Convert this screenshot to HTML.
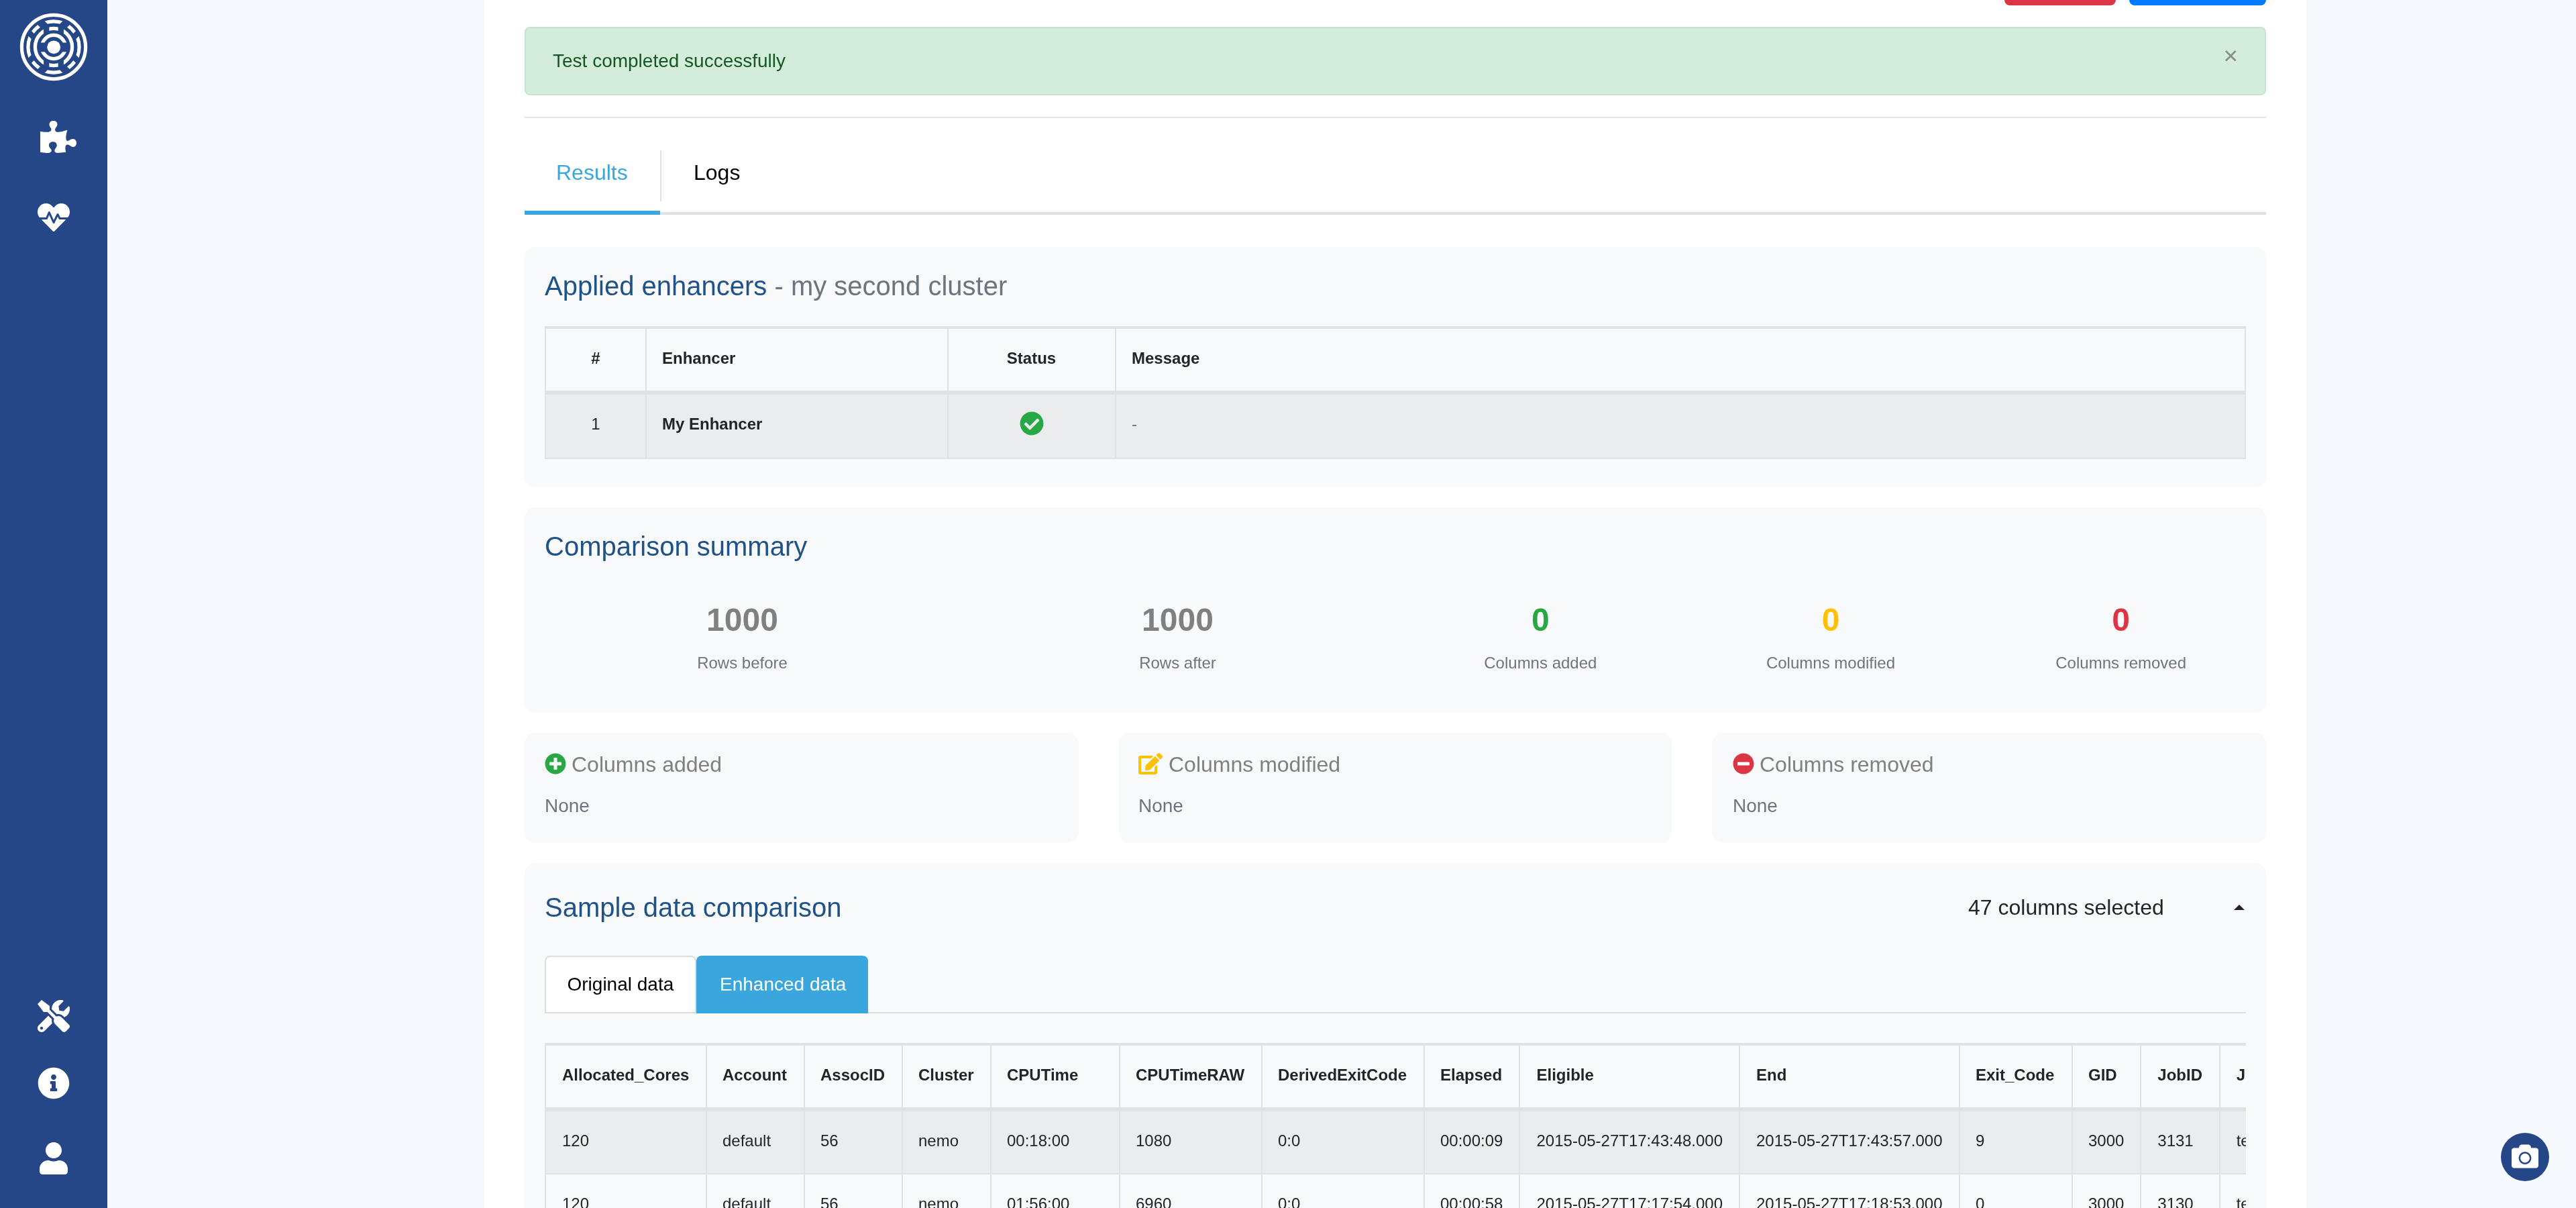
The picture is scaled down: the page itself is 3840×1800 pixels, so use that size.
<!DOCTYPE html>
<html>
<head>
<meta charset="utf-8">
<title>Enhancer test results</title>
<style>
html,body{margin:0;padding:0;}
body{width:3840px;height:1800px;overflow:hidden;position:relative;background:#f5f8fd;font-family:"Liberation Sans",sans-serif;color:#212529;}
.abs{position:absolute;}
.t{position:absolute;white-space:nowrap;margin:0;}
#sidebar{left:0;top:0;width:160px;height:1800px;background:#254687;}
#sidebar svg{position:absolute;fill:#fff;}
#content{left:722px;top:0;width:2716px;height:1800px;background:#fff;}
.card{position:absolute;background:#f8f9fa;border-radius:16px;}
.h5{font-size:40px;line-height:48px;color:#1f5288;}
.muted{color:#6c757d;}
table{border-collapse:collapse;table-layout:fixed;font-size:24px;line-height:36px;color:#212529;}
th,td{border:2px solid #dee2e6;padding:0 24px 0 23px;text-align:left;overflow:hidden;white-space:nowrap;box-sizing:border-box;}
th{font-weight:bold;}
th,td{vertical-align:top;}
.hd{border-top-width:4px;border-bottom-width:6px;padding-top:26px;}
.r1{padding-top:26px;}
tr>:first-child{padding-left:24px;}
#t2 tr>:nth-child(9){padding-left:24.5px;}
#t2 tr>:nth-child(10){padding-left:24px;}
#t2 tr>:nth-child(13){padding-left:24.3px;}
#t2 tr>:nth-child(14){padding-left:23.7px;}
</style>
</head>
<body>
<div id="root" style="position:absolute;left:0;top:0;width:3840px;height:1800px;overflow:hidden;will-change:transform;">

<!-- content column -->
<div id="content" class="abs"></div>

<!-- top buttons (cut off) -->
<div class="abs" style="left:2988px;top:-40px;width:166px;height:48px;background:#dc3545;border-radius:8px;"></div>
<div class="abs" style="left:3174px;top:-40px;width:204px;height:48px;background:#007bff;border-radius:8px;"></div>

<!-- alert -->
<div class="abs" style="left:782px;top:40px;width:2596px;height:102px;box-sizing:border-box;background:#d4edda;border:2px solid #c3e6cb;border-radius:8px;"></div>
<div class="t" style="left:824px;top:70px;font-size:28px;line-height:42px;color:#155724;">Test completed successfully</div>
<svg class="abs" style="left:3313px;top:71px;" width="26" height="28" viewBox="0 0 26 28"><path d="M5 6.7 L19.6 21.3 M19.6 6.7 L5 21.3" stroke="#fff" stroke-width="3" fill="none" opacity=".55"/><path d="M5 5 L19.6 19.6 M19.6 5 L5 19.6" stroke="#85948a" stroke-width="3" fill="none"/></svg>

<!-- hr -->
<div class="abs" style="left:782px;top:174px;width:2596px;height:2px;background:#e5e5e5;"></div>

<!-- main tabs -->
<div class="t" style="left:829px;top:233px;font-size:32px;line-height:48px;color:#39a7dd;">Results</div>
<div class="abs" style="left:984px;top:224px;width:2px;height:76px;background:#dee2e6;"></div>
<div class="t" style="left:1034px;top:233px;font-size:32px;line-height:48px;color:#000;">Logs</div>
<div class="abs" style="left:782px;top:316px;width:2596px;height:4px;background:#dee2e6;"></div>
<div class="abs" style="left:782px;top:314px;width:202px;height:6px;background:#39a7dd;"></div>

<!-- card 1 : applied enhancers -->
<div class="card" style="left:782px;top:368px;width:2596px;height:358px;"></div>
<div class="t h5" style="left:812px;top:402px;">Applied enhancers <span class="muted">- my second cluster</span></div>
<table class="abs" id="t1" style="left:812px;top:486px;width:2534px;">
<colgroup><col style="width:150px"><col style="width:450px"><col style="width:250px"><col style="width:1684px"></colgroup>
<thead><tr style="height:97px;"><th class="hd" style="text-align:center;">#</th><th class="hd">Enhancer</th><th class="hd" style="text-align:center;">Status</th><th class="hd">Message</th></tr></thead>
<tbody><tr style="height:98px;background:#ebecee;"><td class="r1" style="text-align:center;">1</td><td class="r1"><b>My Enhancer</b></td><td class="r1" style="padding-top:25px;"><svg width="36" height="36" viewBox="0 0 512 512" style="display:block;margin:0 auto;position:relative;left:0.5px;fill:#28a745;"><path d="M504 256c0 136.967-111.033 248-248 248S8 392.967 8 256 119.033 8 256 8s248 111.033 248 248zM227.314 387.314l184-184c6.248-6.248 6.248-16.379 0-22.627l-22.627-22.627c-6.248-6.249-16.379-6.249-22.628 0L216 308.118l-70.059-70.059c-6.248-6.248-16.379-6.248-22.628 0l-22.627 22.627c-6.248 6.248-6.248 16.379 0 22.627l104 104c6.249 6.249 16.379 6.249 22.628.001z"/></svg></td><td class="r1 muted">-</td></tr></tbody>
</table>

<!-- card 2 : comparison summary -->
<div class="card" style="left:782px;top:756px;width:2596px;height:306px;"></div>
<div class="t h5" style="left:812px;top:790px;">Comparison summary</div>

<div class="t" style="left:782px;width:649px;top:888px;text-align:center;font-size:48px;line-height:72px;font-weight:bold;color:#808080;">1000</div>
<div class="t muted" style="left:782px;width:649px;top:968px;text-align:center;font-size:24px;line-height:40px;">Rows before</div>
<div class="t" style="left:1431px;width:649px;top:888px;text-align:center;font-size:48px;line-height:72px;font-weight:bold;color:#808080;">1000</div>
<div class="t muted" style="left:1431px;width:649px;top:968px;text-align:center;font-size:24px;line-height:40px;">Rows after</div>
<div class="t" style="left:2080px;width:432.67px;top:888px;text-align:center;font-size:48px;line-height:72px;font-weight:bold;color:#28a745;">0</div>
<div class="t muted" style="left:2080px;width:432.67px;top:968px;text-align:center;font-size:24px;line-height:40px;">Columns added</div>
<div class="t" style="left:2512.67px;width:432.67px;top:888px;text-align:center;font-size:48px;line-height:72px;font-weight:bold;color:#ffc107;">0</div>
<div class="t muted" style="left:2512.67px;width:432.67px;top:968px;text-align:center;font-size:24px;line-height:40px;">Columns modified</div>
<div class="t" style="left:2945.33px;width:432.67px;top:888px;text-align:center;font-size:48px;line-height:72px;font-weight:bold;color:#dc3545;">0</div>
<div class="t muted" style="left:2945.33px;width:432.67px;top:968px;text-align:center;font-size:24px;line-height:40px;">Columns removed</div>
<!-- card 3a/3b/3c -->
<div class="card" style="left:782px;top:1092px;width:826px;height:164px;"></div>
<div class="card" style="left:1668px;top:1092px;width:824px;height:164px;"></div>
<div class="card" style="left:2552px;top:1092px;width:826px;height:164px;"></div>

<svg class="abs" style="left:812px;top:1122px;fill:#28a745;" width="32" height="32" viewBox="0 0 512 512"><path d="M256 8C119 8 8 119 8 256s111 248 248 248 248-111 248-248S393 8 256 8zm144 276c0 6.600-5.400 12-12 12h-92v92c0 6.600-5.400 12-12 12h-56c-6.600 0-12-5.400-12-12v-92h-92c-6.600 0-12-5.400-12-12v-56c0-6.600 5.400-12 12-12h92v-92c0-6.600 5.400-12 12-12h56c6.600 0 12 5.400 12 12v92h92c6.600 0 12 5.400 12 12v56z"/></svg>
<div class="t" style="left:852px;top:1115px;font-size:32px;line-height:48px;color:#808080;">Columns added</div>
<div class="t muted" style="left:812px;top:1180px;font-size:28px;line-height:42px;">None</div>
<svg class="abs" style="left:1697px;top:1122px;fill:#ffc107;" width="36" height="32" viewBox="0 0 576 512"><path d="M402.600 83.200l90.200 90.200c3.800 3.800 3.800 10 0 13.800L274.400 405.600l-92.800 10.300c-12.400 1.400-22.900-9.100-21.500-21.500l10.300-92.800L388.800 83.200c3.800-3.800 10-3.800 13.800 0zm162-22.900l-48.800-48.800c-15.200-15.200-39.900-15.200-55.200 0l-35.400 35.400c-3.800 3.800-3.800 10 0 13.800l90.200 90.200c3.800 3.800 10 3.800 13.800 0l35.400-35.400c15.200-15.300 15.200-40 0-55.200zM384 346.200V448H64V128h229.800c3.200 0 6.200-1.300 8.500-3.500l40-40c7.600-7.600 2.200-20.500-8.500-20.500H48C21.500 64 0 85.500 0 112v352c0 26.500 21.500 48 48 48h352c26.500 0 48-21.500 48-48V306.200c0-10.700-12.900-16-20.500-8.500l-40 40c-2.200 2.300-3.500 5.300-3.500 8.500z"/></svg>
<div class="t" style="left:1742px;top:1115px;font-size:32px;line-height:48px;color:#808080;">Columns modified</div>
<div class="t muted" style="left:1697px;top:1180px;font-size:28px;line-height:42px;">None</div>
<svg class="abs" style="left:2583px;top:1122px;fill:#dc3545;" width="32" height="32" viewBox="0 0 512 512"><path d="M256 8C119 8 8 119 8 256s111 248 248 248 248-111 248-248S393 8 256 8zM124 296c-6.600 0-12-5.400-12-12v-56c0-6.600 5.400-12 12-12h264c6.600 0 12 5.400 12 12v56c0 6.600-5.400 12-12 12H124z"/></svg>
<div class="t" style="left:2623px;top:1115px;font-size:32px;line-height:48px;color:#808080;">Columns removed</div>
<div class="t muted" style="left:2583px;top:1180px;font-size:28px;line-height:42px;">None</div>
<!-- card 4 : sample data -->
<div class="card" style="left:782px;top:1286px;width:2596px;height:600px;"></div>
<div class="t h5" style="left:812px;top:1328px;">Sample data comparison</div>

<div class="t" style="left:2934px;top:1328px;font-size:32px;line-height:48px;color:#212529;">47 columns selected</div>
<div class="abs" style="left:3330px;top:1348px;width:0;height:0;border-left:8px solid transparent;border-right:8px solid transparent;border-bottom:8px solid #212529;"></div>
<!-- nav tabs -->
<div class="abs" style="left:812px;top:1508px;width:2536px;height:2px;background:#ddd;"></div>
<div class="abs" style="left:812px;top:1424px;width:226px;height:86px;box-sizing:border-box;background:#fff;border:2px solid #ddd;border-radius:8px 8px 0 0;"></div>
<div class="t" style="left:845.5px;top:1446px;font-size:28px;line-height:42px;color:#000;">Original data</div>
<div class="abs" style="left:1038px;top:1424px;width:256px;height:86px;background:#39a7dd;border-radius:8px 8px 0 0;"></div>
<div class="t" style="left:1073px;top:1446px;font-size:28px;line-height:42px;color:#fff;">Enhanced data</div>
<!-- data table -->
<div class="abs" style="left:812px;top:1554px;width:2536px;height:246px;overflow:hidden;">
<table id="t2" style="width:2796px;">
<colgroup><col style="width:240px"><col style="width:146px"><col style="width:146px"><col style="width:132px"><col style="width:192px"><col style="width:212px"><col style="width:242px"><col style="width:142px"><col style="width:328px"><col style="width:328px"><col style="width:168px"><col style="width:102px"><col style="width:118px"><col style="width:300px"></colgroup>
<thead><tr style="height:97px;"><th class="hd">Allocated_Cores</th><th class="hd">Account</th><th class="hd">AssocID</th><th class="hd">Cluster</th><th class="hd">CPUTime</th><th class="hd">CPUTimeRAW</th><th class="hd">DerivedExitCode</th><th class="hd">Elapsed</th><th class="hd">Eligible</th><th class="hd">End</th><th class="hd">Exit_Code</th><th class="hd">GID</th><th class="hd">JobID</th><th class="hd">J</th></tr></thead>
<tbody><tr style="height:96px;background:#ebecee;"><td class="r1">120</td><td class="r1">default</td><td class="r1">56</td><td class="r1">nemo</td><td class="r1">00:18:00</td><td class="r1">1080</td><td class="r1">0:0</td><td class="r1">00:00:09</td><td class="r1">2015-05-27T17:43:48.000</td><td class="r1">2015-05-27T17:43:57.000</td><td class="r1">9</td><td class="r1">3000</td><td class="r1">3131</td><td class="r1">test</td></tr><tr style="height:96px;"><td class="r1">120</td><td class="r1">default</td><td class="r1">56</td><td class="r1">nemo</td><td class="r1">01:56:00</td><td class="r1">6960</td><td class="r1">0:0</td><td class="r1">00:00:58</td><td class="r1">2015-05-27T17:17:54.000</td><td class="r1">2015-05-27T17:18:53.000</td><td class="r1">0</td><td class="r1">3000</td><td class="r1">3130</td><td class="r1">test</td></tr></tbody>
</table>
</div>

<!-- camera fab -->
<div class="abs" style="left:3728px;top:1688px;width:72px;height:72px;border-radius:50%;background:#254687;"></div>
<svg class="abs" style="left:3744px;top:1703px;fill:#fff;" width="40" height="40" viewBox="0 0 512 512"><path d="M512 144v288c0 26.500-21.500 48-48 48H48c-26.500 0-48-21.500-48-48V144c0-26.500 21.500-48 48-48h88l12.300-32.900c7-18.700 24.900-31.100 44.900-31.100h125.500c20 0 37.900 12.400 44.900 31.100L376 96h88c26.500 0 48 21.500 48 48zM376 288c0-66.200-53.800-120-120-120s-120 53.800-120 120 53.800 120 120 120 120-53.800 120-120zm-32 0c0 48.500-39.500 88-88 88s-88-39.500-88-88 39.500-88 88-88 88 39.500 88 88z"/></svg>

<!-- sidebar -->
<div id="sidebar" class="abs">
<!-- logo -->
<svg style="left:28px;top:18px;" width="104" height="104" viewBox="-52 -52 104 104">
<defs><clipPath id="c3"><circle r="33"/></clipPath><clipPath id="c4"><circle r="22.6"/></clipPath>
<g id="bq" transform="rotate(-45)"><rect x="20" y="6.5" width="40" height="8.6"/><rect x="20" y="-17.8" width="40" height="11.3"/></g></defs>
<g fill="none" stroke="#fff">
<circle r="38.1" stroke-width="5.2"/>
<g fill="#254687" stroke="none">
<use href="#bq"/><use href="#bq" transform="scale(-1,1)"/><use href="#bq" transform="scale(1,-1)"/><use href="#bq" transform="scale(-1,-1)"/>
<circle r="33.5"/>
</g>
<circle r="27.6" stroke-width="5.3"/>
<g fill="#254687" stroke="none" clip-path="url(#c3)">
<rect x="6.7" y="-40" width="8.2" height="80"/>
<rect x="-14.9" y="-40" width="8.2" height="80"/>
<circle r="22.6"/>
</g>
<circle r="17.6" stroke-width="5.2"/>
<rect x="-30" y="-6.5" width="60" height="13.8" fill="#254687" stroke="none" clip-path="url(#c4)"/>
<circle r="47.6" stroke-width="5.2"/>
</g>
<circle cx="0.2" cy="0.3" r="9.9" fill="#fff"/>
</svg>
<!-- puzzle -->
<svg style="left:60px;top:180px;" width="54" height="48" viewBox="0 0 576 512"><path d="M519.442 288.651c-41.519 0-59.5 31.593-82.058 31.593C377.409 320.244 432 144 432 144s-196.288 80-196.288-3.297c0-35.827 36.288-46.25 36.288-85.985C272 19.216 243.885 0 210.539 0c-34.654 0-66.366 18.891-66.366 56.346 0 41.364 31.711 59.277 31.711 81.75C175.885 207.719 0 166.758 0 166.758v333.237s178.635 41.047 178.635-28.662c0-22.473-40-40.107-40-81.471 0-37.456 29.25-56.346 63.577-56.346 33.673 0 61.788 19.216 61.788 54.717 0 39.735-36.288 50.158-36.288 85.985 0 60.803 129.675 25.73 181.23 25.73 0 0-34.725-120.101 25.827-120.101 35.962 0 46.423 36.152 86.308 36.152C556.712 416 576 387.99 576 354.443c0-34.199-18.962-65.792-56.558-65.792z"/></svg>
<!-- heartbeat -->
<svg style="left:56px;top:300px;" width="48" height="48" viewBox="0 0 512 512"><path d="M320.2 243.8l-49.7 99.4c-6 12.1-23.4 11.700-28.900-.600l-56.900-126.300-30 71.700H60.600l182.500 186.500c7.100 7.300 18.600 7.300 25.700 0L451.400 288H342.300l-22.100-44.200zM473.700 73.900l-2.400-2.500c-51.500-52.600-135.800-52.600-187.400 0L256 100l-27.900-28.500c-51.500-52.700-135.900-52.700-187.400 0l-2.400 2.400C-10.400 123.700-12.500 203 31 256h102.400l35.900-86.200c5.400-12.900 23.600-13.200 29.400-.4l58.200 129.300 49-97.900c5.900-11.800 22.700-11.800 28.600 0l27.600 55.200H481c43.500-53 41.400-132.300-7.300-182.100z"/></svg>
<!-- tools -->
<svg style="left:56px;top:1490px;" width="48" height="48" viewBox="0 0 512 512"><path d="M501.1 395.7L384 278.600c-23.100-23.100-57.600-27.600-85.400-13.900L192 158.100V96L64 0 0 64l96 128h62.100l106.600 106.600c-13.600 27.800-9.200 62.300 13.900 85.400l117.100 117.100c14.600 14.600 38.200 14.600 52.700 0l52.700-52.700c14.500-14.600 14.500-38.200 0-52.700zM331.700 225c28.300 0 54.900 11 74.900 31l19.400 19.400c15.800-6.900 30.800-16.500 43.800-29.500 37.100-37.100 49.700-89.300 37.900-136.700-2.200-9-13.500-12.100-20.100-5.500l-74.400 74.400-67.900-11.300L334 98.900l74.400-74.400c6.600-6.600 3.400-17.900-5.700-20.200-47.400-11.700-99.600.9-136.600 37.900-28.500 28.500-41.900 66.100-41.200 103.600l82.100 82.100c8.100-1.900 16.500-2.900 24.700-2.900zm-103.900 82l-56.700-56.700L18.700 402.800c-25 25-25 65.500 0 90.500s65.500 25 90.500 0l123.600-123.600c-7.600-19.900-9.900-41.600-5-62.700zM64 472c-13.200 0-24-10.800-24-24 0-13.300 10.700-24 24-24s24 10.700 24 24c0 13.200-10.700 24-24 24z"/></svg>
<!-- info -->
<svg style="left:56px;top:1590px;" width="48" height="48" viewBox="0 0 512 512"><path d="M256 8C119.043 8 8 119.083 8 256c0 136.997 111.043 248 248 248s248-111.003 248-248C504 119.083 392.957 8 256 8zm0 110c23.196 0 42 18.804 42 42s-18.804 42-42 42-42-18.804-42-42 18.804-42 42-42zm56 254c0 6.627-5.373 12-12 12h-88c-6.627 0-12-5.373-12-12v-24c0-6.627 5.373-12 12-12h12v-64h-12c-6.627 0-12-5.373-12-12v-24c0-6.627 5.373-12 12-12h64c6.627 0 12 5.373 12 12v100h12c6.627 0 12 5.373 12 12v24z"/></svg>
<!-- user -->
<svg style="left:59px;top:1702px;" width="42" height="48" viewBox="0 0 448 512"><path d="M224 256c70.700 0 128-57.300 128-128S294.700 0 224 0 96 57.300 96 128s57.300 128 128 128zm89.600 32h-16.700c-22.200 10.200-46.900 16-72.900 16s-50.600-5.800-72.900-16h-16.700C60.200 288 0 348.200 0 422.400V464c0 26.500 21.500 48 48 48h352c26.500 0 48-21.500 48-48v-41.600c0-74.200-60.200-134.400-134.400-134.400z"/></svg>
</div>

</div>
</body>
</html>
